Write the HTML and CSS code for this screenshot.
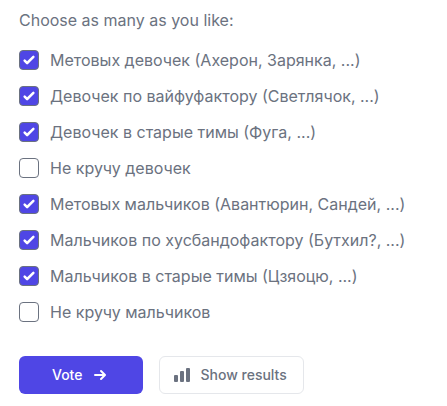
FILE: index.html
```html
<!DOCTYPE html>
<html lang="ru">
<head>
<meta charset="utf-8">
<meta name="viewport" content="width=device-width, initial-scale=1">
<title>Poll</title>
<link rel="stylesheet" href="styles.css">
</head>
<body>
<form class="poll">
  <fieldset class="options">
    <legend class="hint">Choose as many as you like:</legend>
    <label class="option"><input type="checkbox" checked><span>Метовых девочек (Ахерон, Зарянка, ...)</span></label>
    <label class="option"><input type="checkbox" checked><span>Девочек по вайфуфактору (Светлячок, ...)</span></label>
    <label class="option"><input type="checkbox" checked><span>Девочек в старые тимы (Фуга, ...)</span></label>
    <label class="option"><input type="checkbox"><span>Не кручу девочек</span></label>
    <label class="option"><input type="checkbox" checked><span>Метовых мальчиков (Авантюрин, Сандей, ...)</span></label>
    <label class="option"><input type="checkbox" checked><span>Мальчиков по хусбандофактору (Бутхил?, ...)</span></label>
    <label class="option"><input type="checkbox" checked><span>Мальчиков в старые тимы (Цзяоцю, ...)</span></label>
    <label class="option"><input type="checkbox"><span>Не кручу мальчиков</span></label>
  </fieldset>
  <div class="actions">
    <button type="submit" class="button primary">Vote
      <svg width="20" height="20" viewBox="0 0 20 20" fill="currentColor" aria-hidden="true"><path fill-rule="evenodd" d="M10.293 5.293a1 1 0 011.414 0l4 4a1 1 0 010 1.414l-4 4a1 1 0 01-1.414-1.414L12.586 11H5a1 1 0 110-2h7.586l-2.293-2.293a1 1 0 010-1.414z" clip-rule="evenodd"/></svg>
    </button>
    <button type="button" class="button secondary">
      <svg width="20" height="20" viewBox="0 0 20 20" fill="currentColor" aria-hidden="true"><path d="M2 11a1 1 0 011-1h2a1 1 0 011 1v5a1 1 0 01-1 1H3a1 1 0 01-1-1v-5zM8 7a1 1 0 011-1h2a1 1 0 011 1v9a1 1 0 01-1 1H9a1 1 0 01-1-1V7zM14 4a1 1 0 011-1h2a1 1 0 011 1v12a1 1 0 01-1 1h-2a1 1 0 01-1-1V4z"/></svg>
      Show results
    </button>
  </div>
</form>
</body>
</html>
```
FILE: styles.css
```css
* {
  box-sizing: border-box;
}

body {
  margin: 0;
  background: #fff;
  color: #6b7280;
  font: 16px/24px Inter, "Liberation Sans", sans-serif;
}

.poll {
  padding: 8px 19px;
}

.options {
  display: flex;
  flex-direction: column;
  gap: 12px;
  margin: 0;
  padding: 0;
  border: 0;
}

.hint {
  padding: 0;
  margin-bottom: 16px;
}

.option {
  display: flex;
  align-items: center;
  gap: 11px;
}

.option input {
  appearance: none;
  flex: none;
  width: 20px;
  height: 20px;
  margin: 0;
  border: 1px solid #6b7280;
  border-radius: 4px;
  background: #fff center / 100% 100% no-repeat border-box;
}

.option input:checked {
  background-color: #4f46e5;
  background-image: url("data:image/svg+xml,%3Csvg viewBox='0 0 16 16' fill='white' xmlns='http://www.w3.org/2000/svg'%3E%3Cpath d='M12.207 4.793a1 1 0 010 1.414l-5 5a1 1 0 01-1.414 0l-2-2a1 1 0 011.414-1.414L6.5 9.086l4.293-4.293a1 1 0 011.414 0z'/%3E%3C/svg%3E");
}

.actions {
  display: flex;
  gap: 16px;
  margin-top: 32px;
}

.button {
  display: flex;
  align-items: center;
  justify-content: center;
  gap: 8px;
  padding: 8px 16px;
  border: 1px solid transparent;
  border-radius: 6px;
  font: 500 14px/20px Inter, "Liberation Sans", sans-serif;
}

.primary {
  padding: 8px 32px;
  background: #4f46e5;
  color: #fff;
}

.secondary {
  padding-left: 12px;
  border-color: #e5e7eb;
  background: #fff;
  color: #6b7280;
}
```
